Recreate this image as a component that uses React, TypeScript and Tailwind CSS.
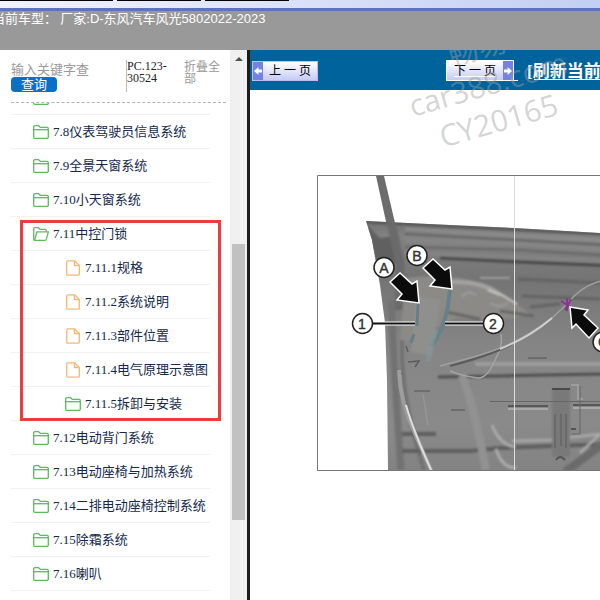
/*
 * Vehicle manual viewer: chapter tree on the left, illustrated page on the right
 */

import { clsx } from "clsx";

type Node = { no: string; title: string; kind?: "file" | "folder" };

const BEFORE: Node[] = [
  { no: "7.8", title: "仪表驾驶员信息系统" },
  { no: "7.9", title: "全景天窗系统" },
  { no: "7.10", title: "小天窗系统" },
];

const CHILDREN: Node[] = [
  { no: "7.11.1", title: "规格", kind: "file" },
  { no: "7.11.2", title: "系统说明", kind: "file" },
  { no: "7.11.3", title: "部件位置", kind: "file" },
  { no: "7.11.4", title: "电气原理示意图", kind: "file" },
  { no: "7.11.5", title: "拆卸与安装", kind: "folder" },
];

const AFTER: Node[] = [
  { no: "7.12", title: "电动背门系统" },
  { no: "7.13", title: "电动座椅与加热系统" },
  { no: "7.14", title: "二排电动座椅控制系统" },
  { no: "7.15", title: "除霜系统" },
  { no: "7.16", title: "喇叭" },
];

function FolderIcon() {
  return (
    <svg width="16" height="14" viewBox="0 0 16 14" fill="none" stroke="#5dbb5d" strokeWidth="1.3" strokeLinejoin="round">
      <path d="M.7 12.3V1.7Q.7.7 1.7.7H5.6L7.3 2.4H14.3Q15.3 2.4 15.3 3.4V12.3Q15.3 13.3 14.3 13.3H1.7Q.7 13.3.7 12.3Z" />
      <path d="M.7 4.7H15.3" />
    </svg>
  );
}

function FolderOpenIcon() {
  return (
    <svg width="16" height="14" viewBox="0 0 16 14" fill="none" stroke="#5dbb5d" strokeWidth="1.3" strokeLinejoin="round">
      <path d="M1.7 13.3Q.7 13.3.7 12.3V1.7Q.7.7 1.7.7H5.4L7 2.4H12.4Q13.3 2.4 13.3 3.4V4.8" />
      <path d="M1.5 13.3L4 4.8H15.4L13.3 12.4Q13 13.3 12.2 13.3Z" />
    </svg>
  );
}

function FileIcon() {
  return (
    <svg width="14" height="16" viewBox="0 0 14 16" fill="none" stroke="#f5b876" strokeWidth="1.3" strokeLinejoin="round">
      <path d="M.7 14.2V1.8Q.7.8 1.7.8H8.6L13.3 5.4V14.2Q13.3 15.2 12.3 15.2H1.7Q.7 15.2.7 14.2Z" />
      <path d="M8.4.9V5.5H13.2" />
    </svg>
  );
}

function Row({ node, nested, open }: { node: Node; nested?: boolean; open?: boolean }) {
  return (
    <a
      href={`#${node.no}`}
      className={clsx(
        "flex h-[34px] items-center gap-1 whitespace-nowrap border-b border-[#f1f1f1] text-[13px] text-[#14294b]",
        nested ? "pl-[54px]" : "pl-[22px]"
      )}
    >
      <span className="flex w-4 shrink-0 justify-center">
        {open ? <FolderOpenIcon /> : node.kind === "file" ? <FileIcon /> : <FolderIcon />}
      </span>
      <span>
        {node.no}
        {node.title}
      </span>
    </a>
  );
}

function Sidebar() {
  return (
    <aside className="flex w-[250px] shrink-0 border-r-3 border-[#1c1c1c] bg-white">
      <div className="flex min-w-0 flex-1 flex-col pl-[11px]">
        {/* Search */}
        <form className="mr-1 flex h-[53px] shrink-0 items-start border-b border-dashed border-[#b5b5b5] pt-[10px]">
          <div className="flex w-[115px] flex-col items-start">
            <input
              type="text"
              aria-label="输入关键字查询"
              placeholder="输入关键字查"
              className="h-[17px] w-[90px] pt-[3px] text-[13px] leading-[14px] outline-none placeholder:text-[#999]"
            />
            <button type="button" className="h-[15px] w-[46px] rounded-sm bg-[#0a6fc7] text-[13px] leading-[15px] text-white">
              查询
            </button>
          </div>
          <div className="h-8 w-[58px] border-l border-[#bbb] text-xs leading-3 text-[#222]">
            PC.123-
            <br />
            30524
          </div>
          <button type="button" className="w-[38px] pt-px text-left text-xs leading-3 text-[#999]">
            折叠全部
          </button>
        </form>

        {/* Chapter tree, scrolled part way down */}
        <nav className="min-h-0 flex-1 overflow-hidden pr-5">
          <ul className="-mt-[22px]">
            <li className="flex h-[34px] items-center border-b border-[#f1f1f1] pl-[22px]">
              <FolderIcon />
            </li>
            {BEFORE.map((n) => (
              <li key={n.no}>
                <Row node={n} />
              </li>
            ))}
            <li className="relative">
              <Row node={{ no: "7.11", title: "中控门锁" }} open />
              <ul>
                {CHILDREN.map((n) => (
                  <li key={n.no}>
                    <Row node={n} nested />
                  </li>
                ))}
              </ul>
              <div className="pointer-events-none absolute -right-[11px] bottom-0 left-[9px] top-[3px] border-3 border-[#e83e42]" />
            </li>
            {AFTER.map((n) => (
              <li key={n.no}>
                <Row node={n} />
              </li>
            ))}
          </ul>
        </nav>
      </div>

      {/* Scroll bar */}
      <div className="flex w-[17px] flex-col items-center bg-[#f0f0f0] pt-[7px]">
        <svg width="8" height="4" viewBox="0 0 8 4" fill="#505050">
          <path d="M0 4L4 0L8 4Z" />
        </svg>
        <div className="mt-[183px] h-[276px] w-[13px] bg-[#c1c1c1]" />
      </div>
    </aside>
  );
}

function ArrowTile({ dir }: { dir: "left" | "right" }) {
  return (
    <span className="flex w-[10px] items-center justify-center bg-[#7482e2]">
      <svg width="8" height="8" viewBox="0 0 8 8" fill="#fff" className={dir === "left" ? "rotate-180" : ""}>
        <path d="M0 2.6H3.6V0L8 4L3.6 8V5.4H0Z" />
      </svg>
    </span>
  );
}

function Door() {
  return (
    <svg width="400" height="297" viewBox="316 175 400 297" className="shrink-0">
      <defs>
        <linearGradient id="panel" x1="0" y1="0" x2="0" y2="1">
          <stop offset="0" stopColor="#696969" />
          <stop offset=".08" stopColor="#828282" />
          <stop offset=".25" stopColor="#747474" />
          <stop offset=".5" stopColor="#858585" />
          <stop offset=".8" stopColor="#8a8a8a" />
          <stop offset="1" stopColor="#828282" />
        </linearGradient>
        <clipPath id="door">
          <path d="M366 221L450 225L515 228L600 233L716 240V470H388L387 380L385 323L380 285L372 240Z" />
        </clipPath>
        <filter id="soft">
          <feGaussianBlur stdDeviation="1.3" />
        </filter>
        <filter id="fine" x="-10%" y="-10%" width="120%" height="120%">
          <feGaussianBlur stdDeviation=".5" />
        </filter>
      </defs>

      <rect x="317.5" y="175.5" width="398" height="295" fill="#fff" />
      <path d="M376 176H384L399 240H390Z" fill="#6c6c6c" filter="url(#fine)" />

      {/* Inner side of the door */}
      <g clipPath="url(#door)">
        <rect x="360" y="215" width="360" height="260" fill="url(#panel)" />
        <g filter="url(#soft)" fill="none">
          <path d="M366 222L716 240" stroke="#555" strokeWidth="2.5" />
          <path d="M405 229L716 247" stroke="#8c8c8c" strokeWidth="3" />
          <path d="M405 234L716 251" stroke="#626262" strokeWidth="2" />
          <path d="M405 240L520 244L716 256" stroke="#858585" strokeWidth="5" />
          <path d="M405 247L520 250L716 262" stroke="#676767" strokeWidth="2" />
          <path d="M405 253L520 257L716 266" stroke="#848484" strokeWidth="4" />
          <path d="M440 258L520 262L716 270" stroke="#494949" strokeWidth="3" />
          <path d="M366 224L380 238L396 236L398 262L378 268Z" fill="#616161" />
          <path d="M391 222L400 262L399 310" stroke="#6b6b6b" strokeWidth="9" />
          <path d="M518 279L600 283M522 296L600 299M530 307L560 304" stroke="#646464" strokeWidth="3" />
          <path d="M405 278Q455 272 492 286L530 314Q505 322 455 318L400 345Z" fill="#8c8a87" />
          <path d="M452 282Q482 281 500 295" stroke="#a3a3a3" strokeWidth="4" />
          <path d="M488 290L502 295L517 304" stroke="#c6c6c6" strokeWidth="2" />
          <path d="M462 297Q468 289 476 295M490 303Q499 309 508 303M480 278H510" stroke="#9c9c9c" strokeWidth="2" />
          <path d="M500 311L534 316M446 312L480 319" stroke="#666" strokeWidth="3" />
          <path d="M416 296L440 300L432 356L411 352Z" fill="#8f8f8d" />
          <path d="M391 300L395 380L401 470" stroke="#727272" strokeWidth="7" />
          <path d="M402 340Q400 395 424 470" stroke="#727272" strokeWidth="4" />
          <path d="M475 364H716" stroke="#9b9b9b" strokeWidth="4" />
          <path d="M438 377L716 372" stroke="#505050" strokeWidth="3" />
          <path d="M402 434H436M402 451H470L500 448L716 440" stroke="#5f5f5f" strokeWidth="4" />
          <path d="M512 441L550 440L600 434" stroke="#a6a6a6" strokeWidth="3" />
          <path d="M462 375Q475 410 486 470" stroke="#929292" strokeWidth="8" />
          <path d="M492 425Q500 445 515 447M496 449Q502 468 516 468" stroke="#ababab" strokeWidth="3" />
          <path d="M565 472L600 446L630 427" stroke="#6a6a6a" strokeWidth="8" />
          <path d="M580 453L600 434" stroke="#b3b3b3" strokeWidth="2" />
          <rect x="552" y="389" width="18" height="68" fill="#797979" />
        </g>
        <g filter="url(#fine)" fill="none">
          <path d="M490 401.5H600" stroke="#666" />
          <path d="M508 406H548M573 405H600" stroke="#585858" strokeWidth="2" />
          <path d="M508 409H548M573 408H600" stroke="#a9a9a9" strokeWidth="2" />
          <path d="M552 389H570" stroke="#484848" strokeWidth="2" />
          <path d="M555 414V448M561 414V446M566 414V448" stroke="#666" strokeWidth="1.5" />
          <path d="M571 385H578V399H583" stroke="#a6a6a6" strokeWidth="1.5" />
          <path d="M580 386V434H572" stroke="#666" />
          <path d="M571 429H576M556 460Q560 454 565 460" stroke="#555" strokeWidth="2" />
          <path d="M414 391H430M451 410H465M528 358H547" stroke="#666" strokeWidth="1.5" />
          <path d="M406 346L408 352M408 362L419 361L415 367M397 370L402 374" stroke="#5c5c5c" strokeWidth="1.5" />
          <path d="M423 394L428 425" stroke="#969696" strokeWidth="1.5" />
          {/* Cables */}
          <path d="M501 334Q503 346 496 358Q488 378 478 378Q462 376 450 371" stroke="#a3a3a3" strokeWidth="1.5" />
          <path d="M450 366Q492 355 512 344" stroke="#5b5b5b" strokeWidth="2" />
          <path d="M440 366Q492 353 512 343T552 318L567 304Q582 285 602 281" stroke="#9f9f9f" strokeWidth="1.5" />
          <path d="M500 349Q530 337 552 318" stroke="#cfcfcf" strokeWidth="2" />
          <path d="M399 370Q400 403 416 436L432 472" stroke="#9d9d9d" strokeWidth="4" />
          <path d="M406 405Q413 430 432 472" stroke="#dedede" strokeWidth="2" />
          {/* Highlighted lock parts */}
          <path d="M418 303L417 326M414 334L411 343" stroke="#667f87" strokeWidth="3" />
          <path d="M450 290L447 312L441 330L432 346" stroke="#688189" strokeWidth="4" />
          <path d="M436 330L430 350L428 362" stroke="#80979b" strokeWidth="5" opacity=".6" />
          <path d="M561 301L573 309M565 310L571 299M567 298V311" stroke="#8a3595" strokeWidth="2" />
        </g>
      </g>
      <path d="M514.5 175V471" stroke="#dedede" />
      <path d="M716 175.5H317.5V470.5H716" fill="none" stroke="#777" />

      {/* Call-outs */}
      <path d="M385 323.5H415M445 323.5H483" stroke="#fff" strokeWidth="4" />
      <path d="M372 323.5H415M445 323.5H483" stroke="#111" strokeWidth="2" />
      <g fill="#0b0b0b" stroke="#fff" strokeWidth="1.5">
        <path d="M390 282L400 273L412 284L417 281L419 303L397 300L402 294Z" />
        <path d="M423 268L433 259L445 270L450 267L452 289L430 286L435 280Z" />
        <path d="M570 307L588 310L584 315L598 328L589 338L576 324L572 328Z" />
      </g>
      <g fill="#fff" stroke="#222" strokeWidth="1.5">
        <circle cx="384" cy="267.5" r="10" />
        <circle cx="417" cy="255.5" r="10" />
        <circle cx="362.5" cy="323.5" r="10" />
        <circle cx="493.5" cy="323.5" r="10" />
        <circle cx="603" cy="342" r="10" />
      </g>
      <g
        className="font-['Liberation_Sans',sans-serif] text-[14px]"
        fill="#333"
        stroke="#333"
        strokeWidth=".4"
        textAnchor="middle"
      >
        <text x="384" y="273">A</text>
        <text x="417" y="261">B</text>
        <text x="362" y="329">1</text>
        <text x="493" y="329">2</text>
        <text x="603" y="347">C</text>
      </g>
    </svg>
  );
}

export default function App() {
  return (
    <div className="flex h-screen flex-col overflow-hidden bg-white font-['Liberation_Serif','Noto_Sans_CJK_SC',serif]">
      {/* Window edge and current model */}
      <div className="h-[11px] shrink-0 border-b-3 border-[#5d74bd] bg-gradient-to-r from-[#f2f2fd] to-[#c3cff2]">
        <div className="flex gap-1">
          <span className="h-px w-[113px] bg-black" />
          <span className="h-px w-[84px] bg-black" />
          <span className="h-px w-[84px] bg-black" />
        </div>
      </div>
      <header className="h-[39px] shrink-0 overflow-hidden bg-[#999]">
        <p className="-ml-2 whitespace-nowrap text-[13px] leading-4 text-white">
          当前车型： 厂家:<span className="font-['Liberation_Sans','Noto_Sans_CJK_SC',sans-serif]">D-东风汽车风光5802022-2023</span>
        </p>
      </header>

      <div className="flex min-h-0 flex-1">
        <Sidebar />

        <main className="relative min-w-0 flex-1 overflow-hidden">
          {/* Page navigation */}
          <div className="flex h-10 items-center whitespace-nowrap bg-[#00639c] pl-0.5 pt-px">
            <button type="button" className="flex h-5 w-[66px] shrink-0 border border-[#b9c0f0] bg-gradient-to-b from-white to-[#c6cbf5] text-xs text-black">
              <ArrowTile dir="left" />
              <span className="flex-1 self-center">上 一 页</span>
            </button>
            <a href="#next" className="ml-32 flex h-[21px] shrink-0 text-white underline">
              <span className="flex w-[68px] border border-white bg-gradient-to-b from-white to-[#c6cbf5] text-xs text-black">
                <span className="inline-block flex-1 self-center text-center">下 一 页</span>
                <ArrowTile dir="right" />
              </span>
              <span className="w-1 border-b border-white" />
            </a>
            <a href="#refresh" className="ml-[9px] pt-0.5 text-[17px] font-bold text-white underline underline-offset-2">
              [刷新当前页]
            </a>
          </div>

          <div className="pl-[66px] pt-[85px]">
            <Door />
          </div>

          {/* Watermark */}
          <div className="pointer-events-none absolute -top-[23px] left-[148px] w-[180px] -rotate-16 text-center font-['Open_Sans','Noto_Sans_CJK_SC',sans-serif] text-[30px] leading-[38px] text-[#a0a0a0]/45">
            <p>畅易</p>
            <p>car388.com</p>
            <p>CY20165</p>
          </div>
        </main>
      </div>
    </div>
  );
}
